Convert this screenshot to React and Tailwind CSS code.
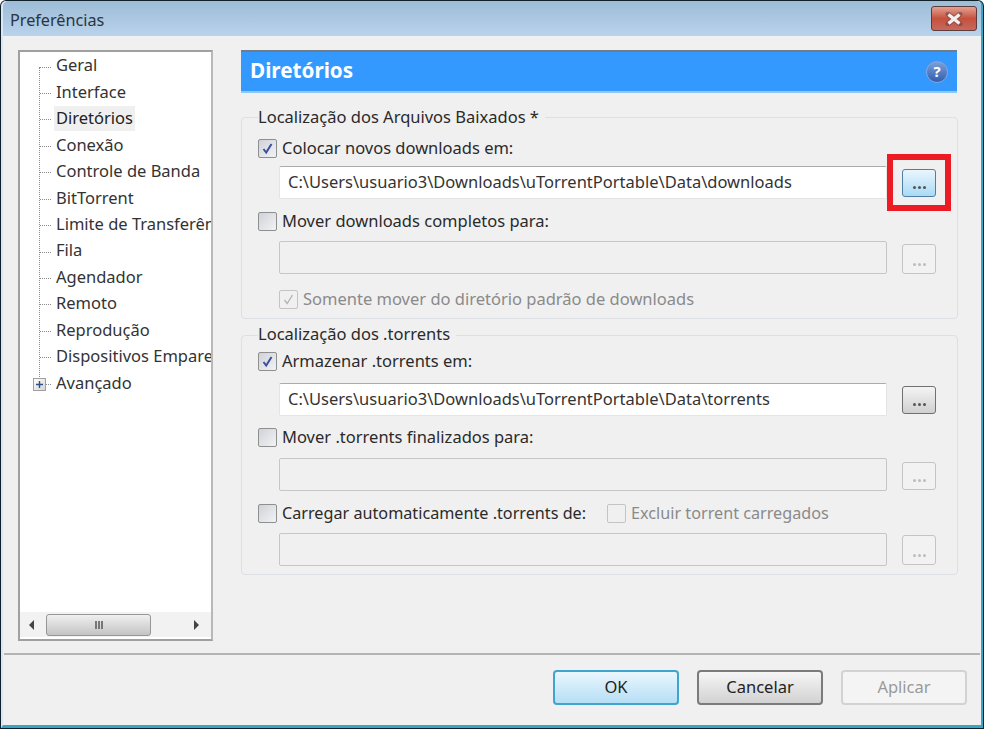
import React from "react";

const treeItems = [
	"Geral",
	"Interface",
	"Diretórios",
	"Conexão",
	"Controle de Banda",
	"BitTorrent",
	"Limite de Transferência",
	"Fila",
	"Agendador",
	"Remoto",
	"Reprodução",
	"Dispositivos Emparelhados",
	"Avançado",
];

function CheckBox({ checked, disabled }) {
	const border = disabled ? "border-[#c4c4c4]" : "border-[#8e8f8f]";
	const bg = disabled ? "bg-[#f0f0f0]" : "bg-gradient-to-br from-[#cfd2d8] to-[#f2f3f5]";
	return (
		<span className={`flex w-[19px] h-[19px] shrink-0 items-center justify-center rounded-[2px] border ${border} ${bg}`}>
			{checked && (
				<svg width="13" height="13" viewBox="0 0 13 13">
					<path
						d="M2.5 7 L5.2 10.5 L10.5 2"
						fill="none"
						stroke={disabled ? "#b5b5b5" : "#3d4f9e"}
						strokeWidth={disabled ? "1.4" : "2"}
					/>
				</svg>
			)}
		</span>
	);
}

function CheckRow({ label, checked, disabled, className = "" }) {
	return (
		<div className={`flex items-center h-[19px] ${className}`}>
			<CheckBox checked={checked} disabled={disabled} />
			<span className={`ml-[5px] whitespace-nowrap ${disabled ? "text-[#8a8a8a]" : "text-[#2a2a2a]"}`}>{label}</span>
		</div>
	);
}

function BrowseButton({ disabled, active, className = "" }) {
	let style = "border-[#707070] bg-gradient-to-b from-[#f4f4f4] to-[#d0d0d0]";
	let dot = "bg-[#555]";
	if (disabled) {
		style = "border-[#c4c4c4] bg-[#f2f2f2]";
		dot = "bg-[#bdbdbd]";
	}
	if (active) style = "border-[#4f7fa6] bg-gradient-to-b from-[#eaf6fd] to-[#a9daf5]";
	return (
		<div className={`flex w-[34px] shrink-0 items-end justify-center gap-[2px] rounded-[3px] border pb-[7px] ${style} ${className}`}>
			<span className={`h-[3px] w-[3px] rounded-full ${dot}`} />
			<span className={`h-[3px] w-[3px] rounded-full ${dot}`} />
			<span className={`h-[3px] w-[3px] rounded-full ${dot}`} />
		</div>
	);
}

function PathRow({ value, disabled, active, btnClass, className = "" }) {
	return (
		<div className={`flex items-center ml-[21px] ${className}`}>
			<div
				className={`flex h-[33px] w-[608px] items-center rounded-[2px] border px-[8px] whitespace-nowrap ${
					disabled ? "border-[#c6c6c6] bg-[#f0f0f0]" : "border-[#e4e4e4] border-t-[#ababab] bg-white"
				}`}
			>
				{value}
			</div>
			<BrowseButton disabled={disabled} active={active} className={`ml-[15px] ${btnClass}`} />
		</div>
	);
}

function GroupBox({ title, titleClass = "mt-[-11px]", children, className = "" }) {
	return (
		<div className={`rounded-[4px] border border-[#dcdfe3] pl-[16px] ${className}`}>
			<div className={`h-[20px] w-fit bg-[#f0f0f0] pr-[6px] leading-[20px] text-[#2a2a2a] ${titleClass}`}>{title}</div>
			{children}
		</div>
	);
}

function Tree() {
	return (
		<div className="relative flex h-[591px] w-[195px] shrink-0 flex-col overflow-hidden border-2 border-[#a0a0a0] border-r-[#b8b8b8] bg-white">
			<div className="relative flex-1 overflow-hidden pt-[0.5px]">
				<div className="absolute left-[19px] top-[15px] h-[316px] border-l border-dotted border-[#8a8a8a]" />
				{treeItems.map((item, i) => (
					<div key={item} className="relative flex h-[26.45px] items-center pl-[36px] whitespace-nowrap text-[#333]">
						<span className="absolute left-[20px] top-[14px] w-[11px] border-t border-dotted border-[#8a8a8a]" />
						{i === treeItems.length - 1 && (
							<span className="absolute left-[13px] top-[8px] flex h-[13px] w-[13px] items-center justify-center border border-[#a0a0a0] bg-gradient-to-br from-white to-[#d5d5d5]">
								<svg width="9" height="9" viewBox="0 0 9 9">
									<path d="M1 4.5 H8 M4.5 1 V8" stroke="#2d4f8a" strokeWidth="1.4" />
								</svg>
							</span>
						)}
						<span className={i === 2 ? "bg-[#f0f0f0] text-[#222] -ml-[2px] px-[2px]" : ""}>{item}</span>
					</div>
				))}
			</div>
			<div className="mb-[2px] flex h-[25px] shrink-0 items-center bg-[#f2f2f2] pl-[26px]">
				<div className="absolute left-[9px] bottom-[9px] h-0 w-0 border-y-[5px] border-r-[5px] border-y-transparent border-r-[#444]" />
				<div className="flex h-[22px] w-[105px] items-center justify-center gap-[1px] rounded-[3px] border border-[#979797] bg-gradient-to-b from-[#f0f0f0] to-[#c4c4c4]">
					<span className="h-[8px] w-[2px] bg-[#777]" />
					<span className="h-[8px] w-[2px] bg-[#777]" />
					<span className="h-[8px] w-[2px] bg-[#777]" />
				</div>
				<div className="absolute right-[12px] bottom-[9px] h-0 w-0 border-y-[5px] border-l-[5px] border-y-transparent border-l-[#444]" />
			</div>
		</div>
	);
}

function DialogButton({ label, variant }) {
	const styles = {
		ok: "border-2 border-[#3fa5cf] bg-gradient-to-b from-[#eaf6fd] to-[#b6dff6] text-[#222]",
		normal: "border-2 border-[#7b7b7b] bg-gradient-to-b from-[#f6f6f6] to-[#d2d2d2] text-[#222]",
		disabled: "border-2 border-[#d2d2d2] bg-[#f4f4f4] text-[#9a9a9a]",
	};
	return (
		<div className={`flex h-[35px] w-[126px] items-center justify-center rounded-[4px] ${styles[variant]}`}>{label}</div>
	);
}

export default function App() {
	return (
		<div
			className="h-[729px] w-[984px] overflow-hidden rounded-t-[6px] bg-[#10202a] p-[1px] pb-[1px] text-[16.5px] text-[#333]"
			style={{ fontFamily: '"Noto Sans", sans-serif' }}
		>
			<div className="flex h-full flex-col rounded-t-[5px] border-x-2 border-b-[3px] border-l-[#dbe7f3] border-r-[#39a5c4] border-b-[#39a5c4] bg-[#f0f0f0]">
				{/* title bar */}
				<div className="flex h-[35px] shrink-0 items-center justify-between rounded-t-[5px] bg-gradient-to-b from-[#9dbcd6] to-[#bad3ec] pl-[7px] pr-[4px]">
					<span className="mt-[3px] text-[16.2px] text-[#2c3440]">Preferências</span>
					<div className="flex h-[25px] w-[46px] items-center justify-center rounded-[3px] border border-[#5b3b3b] bg-gradient-to-b from-[#e2a193] via-[#c5503e] to-[#c8685c]">
						<svg width="20" height="14" viewBox="0 0 20 14">
							<path d="M4 2 L16 12 M16 2 L4 12" stroke="#4a3a3a" strokeWidth="5" strokeLinecap="round" opacity="0.45" />
							<path d="M4.5 2.5 L15.5 11.5 M15.5 2.5 L4.5 11.5" stroke="#f4efee" strokeWidth="3.4" />
						</svg>
					</div>
				</div>

				{/* content */}
				<div className="flex flex-1 pl-[15px] pt-[14px]">
					<Tree />

					<div className="ml-[28px] w-[717px]">
						<div className="mr-[1px] flex h-[43px] items-center justify-between border-t-2 border-t-[#6f7d8a] border-b-2 border-b-[#8fc7f5] bg-[#3399ff] pl-[9px] pr-[9px]">
							<span className="mt-[-1px] text-[20.7px] font-bold text-white">Diretórios</span>
							<span className="flex h-[22px] w-[22px] items-center justify-center rounded-full border border-[#8aa5d8] bg-gradient-to-b from-[#7d9fd8] to-[#2f5fae] text-[15px] font-bold leading-none text-white">
								?
							</span>
						</div>

						<GroupBox title="Localização dos Arquivos Baixados *" className="mt-[24px] h-[202px]">
							<CheckRow className="mt-[12px]" label="Colocar novos downloads em:" checked />
							<div className="relative">
								<PathRow
									className="mt-[8px]"
									value="C:\Users\usuario3\Downloads\uTorrentPortable\Data\downloads"
									active
									btnClass="h-[28px]"
								/>
								{/* red highlight drawn over the screenshot */}
								<div className="absolute left-[629px] top-[-12px] h-[57px] w-[64px] border-[6px] border-[#ed1c24]" />
							</div>
							<CheckRow className="mt-[13px]" label="Mover downloads completos para:" />
							<PathRow className="mt-[10px]" disabled btnClass="h-[30px] mt-[3px]" />
							<CheckRow className="mt-[16px] ml-[21px]" label="Somente mover do diretório padrão de downloads" checked disabled />
						</GroupBox>

						<GroupBox title="Localização dos .torrents" titleClass="mt-[-12px]" className="mt-[16px] h-[240px]">
							<CheckRow className="mt-[8px]" label="Armazenar .torrents em:" checked />
							<PathRow
								className="mt-[12px]"
								value="C:\Users\usuario3\Downloads\uTorrentPortable\Data\torrents"
								btnClass="h-[28px] mt-[1px]"
							/>
							<CheckRow className="mt-[12px]" label="Mover .torrents finalizados para:" />
							<PathRow className="mt-[11px]" disabled btnClass="h-[28px] mt-[3px]" />
							<div className="mt-[13px] flex items-center text-[16.2px]">
								<CheckRow label="Carregar automaticamente .torrents de:" />
								<CheckRow className="ml-[21px]" label="Excluir torrent carregados" disabled />
							</div>
							<PathRow className="mt-[10px]" disabled btnClass="h-[30px]" />
						</GroupBox>
					</div>
				</div>

				{/* footer */}
				<div className="mx-[1px] flex h-[72px] shrink-0 items-start justify-end gap-[18px] border-t-2 border-t-[#b4b4b4] pr-[13px] pt-[15px]">
					<DialogButton label="OK" variant="ok" />
					<DialogButton label="Cancelar" variant="normal" />
					<DialogButton label="Aplicar" variant="disabled" />
				</div>
			</div>
		</div>
	);
}
